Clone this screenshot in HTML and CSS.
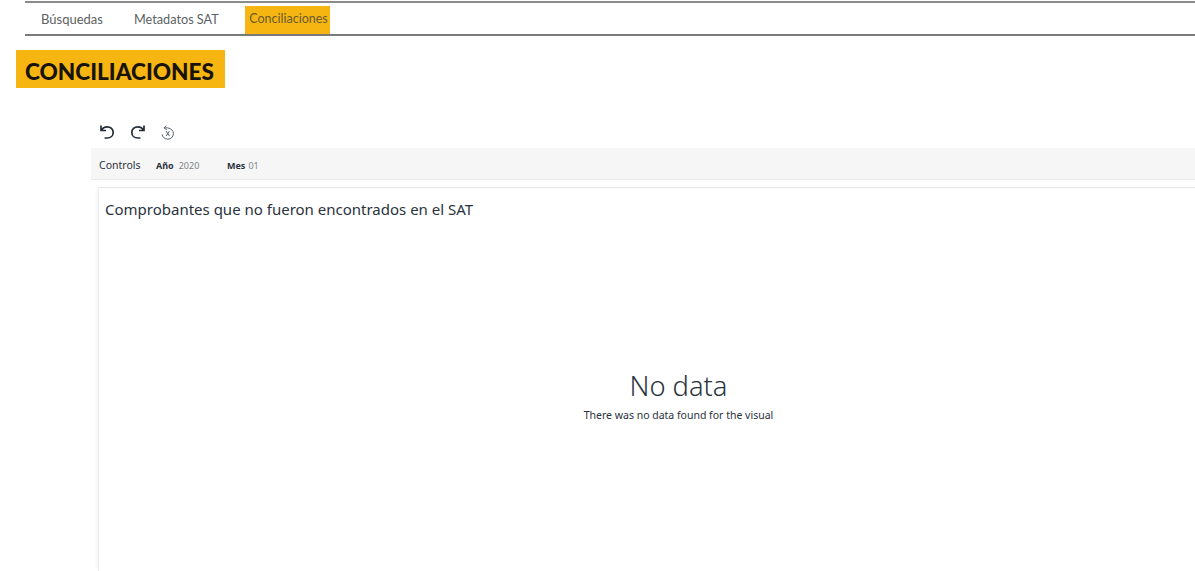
FILE: index.html
```html
<!DOCTYPE html>
<html lang="es">
<head>
<meta charset="utf-8">
<title>Conciliaciones</title>
<link rel="stylesheet" href="styles.css">
</head>
<body>
<nav class="tabs">
  <a class="tab tab-first">Búsquedas</a>
  <a class="tab tab-second">Metadatos SAT</a>
  <a class="tab tab-active">Conciliaciones</a>
</nav>
<h1 class="title">CONCILIACIONES</h1>
<main class="dash">
  <div class="tools">
    <svg class="tool" width="16" height="16" viewBox="0 0 16 16"><path d="M2 1.5V6.5H7M2.4 6.2C3.6 3.9 5.6 2.8 8.2 2.8 11.6 2.8 14.2 5.3 14.2 8.4 14.2 11.6 11.6 14 8.2 14H5.6" fill="none" stroke="#222b36" stroke-width="1.7"/></svg>
    <svg class="tool" width="16" height="16" viewBox="0 0 16 16"><path d="M14 1.5V6.5H9M13.6 6.2C12.4 3.9 10.4 2.8 7.8 2.8 4.4 2.8 1.8 5.3 1.8 8.4 1.8 11.6 4.4 14 7.8 14H10.4" fill="none" stroke="#222b36" stroke-width="1.7"/></svg>
    <svg class="tool tool-reset" width="14" height="15" viewBox="0 0 14 15"><path d="M5.2 .6 3 2.8 5.8 4.8M3.2 2.9C3.9 2.8 5 2.7 6.5 2.9 9.8 3.2 12.4 5.5 12.4 8.6 12.4 11.8 9.8 14.2 6.8 14.2 3.8 14.2 1.4 12 1.1 9.4" fill="none" stroke="#55606c" stroke-width="1"/><path d="M5.2 6.2 8.4 11M8.4 6.2 5.2 11" fill="none" stroke="#55606c" stroke-width="1"/></svg>
  </div>
  <div class="controls">
    <span class="controls-label">Controls</span>
    <span class="control control-year"><b>Año</b> <span class="value">2020</span></span>
    <span class="control control-month"><b>Mes</b> <span class="value">01</span></span>
  </div>
  <section class="panel">
    <h2 class="panel-title">Comprobantes que no fueron encontrados en el SAT</h2>
    <div class="empty">
      <div class="empty-title">No data</div>
      <div class="empty-text">There was no data found for the visual</div>
    </div>
  </section>
</main>
</body>
</html>
```
FILE: styles.css
```css
* { box-sizing: border-box; }
html, body { height: 100%; }
body {
  margin: 0;
  height: 571px;
  overflow: hidden;
  background: #fff;
  font-family: "Noto Sans", "Open Sans", sans-serif;
  color: #2a323c;
  display: flex;
  flex-direction: column;
}
.tabs {
  margin: 1px 0 0 25px;
  height: 35px;
  border-top: 2px solid #8b8b8b;
  border-bottom: 2px solid #7a7a7a;
  display: flex;
  align-items: stretch;
  font-family: Lato, "Open Sans", sans-serif;
  font-size: 13px;
  color: #5c5f63;
}
.tab { display: flex; align-items: center; padding-top: 1px; }
.tab-first { margin-left: 16px; width: 93px; }
.tab-second { width: 111px; font-size: 12.7px; }
.tab-active {
  margin-top: 3px;
  width: 85px;
  justify-content: center;
  padding: 0 0 3px 2px;
  background: #f6b511;
  color: #6a5c30;
  font-size: 12.5px;
}
.title {
  margin: 14px 0 0 16px;
  width: 209px;
  height: 38px;
  background: #f6b511;
  color: #17130a;
  font-family: Lato, "Open Sans", sans-serif;
  font-weight: 900;
  font-size: 22.6px;
  line-height: 44px;
  padding-left: 9px;
  white-space: nowrap;
}
.dash {
  margin-left: 91px;
  flex: 1;
  display: flex;
  flex-direction: column;
  min-height: 0;
}
.tools {
  height: 60px;
  display: flex;
  align-items: center;
  padding: 28px 0 0 8px;
}
.tool { display: block; margin-right: 15px; }
.tool-reset { margin-left: 0; }
.controls {
  height: 32px;
  background: #f6f6f6;
  display: flex;
  align-items: center;
  padding: 3px 0 0 8px;
  font-size: 10.5px;
  border-bottom: 1px solid #ebebeb;
}
.controls-label { width: 57px; }
.control { font-size: 9px; display: flex; gap: 5px; }
.control b { font-weight: 700; }
.control-year { width: 71px; }
.control-month { gap: 3px; }
.value { color: #7d848c; }
.panel {
  flex: 1;
  margin: 7px 0 0 7px;
  min-height: 0;
  border-top: 1px solid #e6e6e6;
  border-left: 1px solid #ececec;
  background: #fff;
  display: flex;
  flex-direction: column;
  box-shadow: -3px 0 4px -2px #f2f2f2;
}
.panel-title {
  margin: 11px 0 0 6px;
  font-size: 15px;
  font-weight: 400;
  line-height: 20px;
  white-space: nowrap;
}
.empty {
  margin: 149px 0 0 63px;
  text-align: center;
}
.empty-title { font-size: 27.3px; font-weight: 300; line-height: 36px; color: #2a3440; }
.empty-text { margin-top: 3px; font-size: 10.5px; line-height: 16px; }
```
